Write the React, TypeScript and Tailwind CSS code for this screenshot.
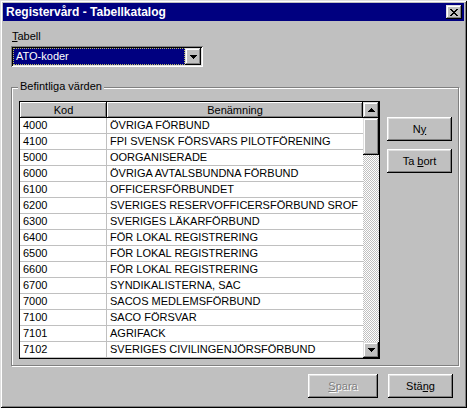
import React from 'react';

const rows: [string, string][] = [
    ['4000', 'ÖVRIGA FÖRBUND'],
    ['4100', 'FPI SVENSK FÖRSVARS PILOTFÖRENING'],
    ['5000', 'OORGANISERADE'],
    ['6000', 'ÖVRIGA AVTALSBUNDNA FÖRBUND'],
    ['6100', 'OFFICERSFÖRBUNDET'],
    ['6200', 'SVERIGES RESERVOFFICERSFÖRBUND SROF'],
    ['6300', 'SVERIGES LÄKARFÖRBUND'],
    ['6400', 'FÖR LOKAL REGISTRERING'],
    ['6500', 'FÖR LOKAL REGISTRERING'],
    ['6600', 'FÖR LOKAL REGISTRERING'],
    ['6700', 'SYNDIKALISTERNA, SAC'],
    ['7000', 'SACOS MEDLEMSFÖRBUND'],
    ['7100', 'SACO FÖRSVAR'],
    ['7101', 'AGRIFACK'],
    ['7102', 'SVERIGES CIVILINGENJÖRSFÖRBUND'],
];

const raised = 'shadow-[inset_-1px_-1px_#000,inset_1px_1px_#fff,inset_-2px_-2px_#808080,inset_2px_2px_#dfdfdf]';
const raisedSmall = 'shadow-[inset_-1px_-1px_#000,inset_1px_1px_#dfdfdf,inset_-2px_-2px_#808080,inset_2px_2px_#fff]';
const headerCell = 'shadow-[inset_-1px_-1px_#000,inset_1px_1px_#fff,inset_-2px_-2px_#808080]';

const Arrow = ({ dir }: { dir: 'up' | 'down' }) => (
    <svg width="7" height="4" viewBox="0 0 7 4" shapeRendering="crispEdges">
        {dir === 'down'
            ? <path d="M0 0h7v1h-1v1h-1v1h-1v1h-1v-1h-1v-1h-1v-1h-1z" fill="#000" />
            : <path d="M3 0h1v1h1v1h1v1h1v1h-7v-1h1v-1h1v-1h1z" fill="#000" />}
    </svg>
);

const CloseGlyph = () => (
    <svg width="8" height="7" viewBox="0 0 8 7" shapeRendering="crispEdges">
        <path
            d="M0 0h2v1h1v1h2v-1h1v-1h2v1h-1v1h-1v1h-1v1h1v1h1v1h1v1h-2v-1h-1v-1h-2v1h-1v1h-2v-1h1v-1h1v-1h1v-1h-1v-1h-1v-1h-1z"
            fill="#000"
        />
    </svg>
);

const PushButton: React.FC<{ children: React.ReactNode; className?: string; disabled?: boolean }> = ({ children, className = '', disabled }) => (
    <div
        className={`h-[24px] flex items-center justify-center bg-[#c0c0c0] ${raised} ${
            disabled ? 'text-[#808080] [text-shadow:1px_1px_0_#fff]' : 'text-black'
        } ${className}`}
    >
        <span className="whitespace-pre">{children}</span>
    </div>
);

export default function App() {
    return (
        <div className="w-[467px] h-[408px] bg-[#c0c0c0] p-[3px] flex flex-col text-[11px] leading-[13px] text-black font-['Liberation_Sans',Arial,sans-serif] shadow-[inset_1px_1px_#dfdfdf,inset_-1px_-1px_#000,inset_2px_2px_#fff,inset_-2px_-2px_#808080]">
            {/* title bar */}
            <div className="h-[18px] bg-[#000080] flex items-center justify-between pl-[3px] pr-[2px]">
                <span className="text-white font-bold text-[12px] leading-[14px]">Registervård - Tabellkatalog</span>
                <div className={`w-[16px] h-[14px] bg-[#c0c0c0] flex items-center justify-center ${raisedSmall}`}>
                    <CloseGlyph />
                </div>
            </div>

            <div className="flex flex-col pl-[8px]">
                <div className="mt-[9px] ml-[1px]">
                    <span className="underline underline-offset-1">T</span>abell
                </div>

                {/* combo box */}
                <div className="mt-[3px] w-[192px] h-[21px] p-[2px] bg-white flex shadow-[inset_1px_1px_#808080,inset_-1px_-1px_#fff,inset_2px_2px_#000,inset_-2px_-2px_#dfdfdf]">
                    <div className="flex-1 bg-[#000080] text-white flex items-center pl-[2px] border border-dotted border-[#b8b860]">
                        ATO-koder
                    </div>
                    <div className={`w-[16px] bg-[#c0c0c0] flex items-center justify-center ${raisedSmall}`}>
                        <Arrow dir="down" />
                    </div>
                </div>

                {/* group box */}
                <div className="relative mt-[20px] w-[448px] h-[279px] border border-[#808080] shadow-[inset_1px_1px_#fff,1px_1px_#fff] pl-[7px] pt-[13px] flex">
                    <span className="absolute left-[6px] top-[-8px] px-[2px] bg-[#c0c0c0]">Befintliga värden</span>

                    <div className="w-[361px] h-[258px] border border-black bg-white flex">
                        <div className="w-[343px] flex flex-col">
                            <div className="h-[16px] flex bg-[#c0c0c0]">
                                <div className={`w-[87px] flex items-center justify-center ${headerCell}`}>Kod</div>
                                <div className={`flex-1 flex items-center justify-center ${headerCell}`}>Benämning</div>
                            </div>
                            {rows.map(([kod, namn], i) => (
                                <div key={i} className="h-[16px] flex border-b border-[#c0c0c0]">
                                    <div className="w-[87px] border-r border-[#c0c0c0] pl-[3px] flex items-center">{kod}</div>
                                    <div className="flex-1 pl-[3px] flex items-center whitespace-nowrap overflow-hidden">{namn}</div>
                                </div>
                            ))}
                        </div>

                        {/* scrollbar */}
                        <div className="w-[16px] flex flex-col bg-[image:repeating-conic-gradient(#c0c0c0_0_25%,#fff_0_50%)] bg-[length:2px_2px]">
                            <div className={`h-[16px] bg-[#c0c0c0] flex items-center justify-center ${raisedSmall}`}>
                                <Arrow dir="up" />
                            </div>
                            <div className={`h-[37px] bg-[#c0c0c0] ${raisedSmall}`} />
                            <div className="flex-1" />
                            <div className={`h-[16px] bg-[#c0c0c0] flex items-center justify-center ${raisedSmall}`}>
                                <Arrow dir="down" />
                            </div>
                        </div>
                    </div>

                    <div className="ml-[7px] mt-[16px] flex flex-col gap-[8px]">
                        <PushButton className="w-[65px]">
                            N<span className="underline underline-offset-1">y</span>
                        </PushButton>
                        <PushButton className="w-[65px]">
                            Ta <span className="underline underline-offset-1">b</span>ort
                        </PushButton>
                    </div>
                </div>

                {/* bottom buttons */}
                <div className="mt-[8px] flex justify-end gap-[10px] pr-[11px]">
                    <PushButton className="w-[70px]" disabled>
                        <span className="underline underline-offset-1">S</span>para
                    </PushButton>
                    <PushButton className="w-[65px]">
                        Stä<span className="underline underline-offset-1">ng</span>
                    </PushButton>
                </div>
            </div>
        </div>
    );
}
